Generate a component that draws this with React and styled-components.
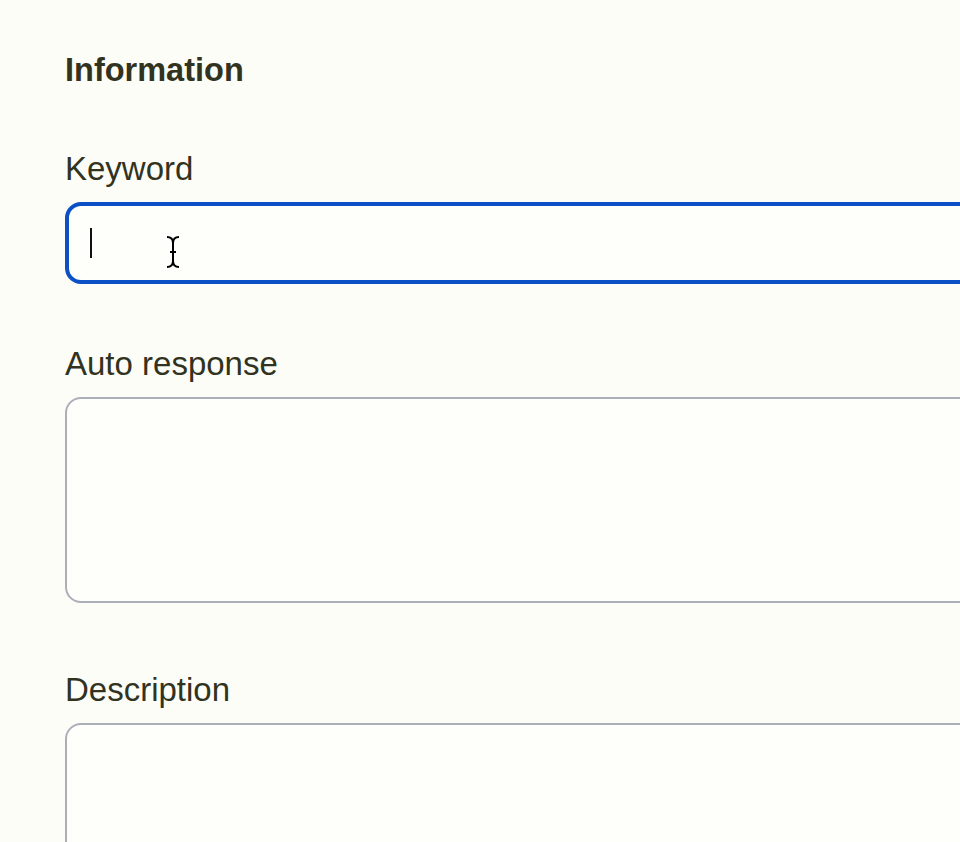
import React from "react";
import styled, { createGlobalStyle } from "styled-components";

const GlobalStyle = createGlobalStyle`
  html, body {
    margin: 0;
    padding: 0;
    overflow: hidden;
    background-color: #fdfdf8;
    font-family: "Liberation Sans", Arial, sans-serif;
  }
`;

const Page = styled.div`
  display: flex;
  flex-direction: column;
  padding: 51px 0 0 65px;
  height: 842px;
  box-sizing: border-box;
  overflow: hidden;
  color: #31331f;
`;

const Heading = styled.h3`
  margin: 0;
  font-size: 32.5px;
  line-height: 38px;
  font-weight: 700;
`;

const Field = styled.div`
  display: flex;
  flex-direction: column;
  gap: 14px;
  margin-top: ${(p) => p.top}px;
`;

const Label = styled.label`
  font-size: 33px;
  line-height: 38px;
  font-weight: 400;
`;

const Input = styled.div`
  position: relative;
  width: 1000px;
  height: 82px;
  box-sizing: border-box;
  border: 4px solid #0b50c4;
  border-radius: 16px;
  background: #fefefb;
`;

const Caret = styled.span`
  position: absolute;
  left: 21px;
  top: 22px;
  width: 2px;
  height: 30px;
  background: #111;
`;

const Pointer = styled.svg`
  position: absolute;
  left: 96px;
  top: 28px;
`;

const TextArea = styled.div`
  width: 1000px;
  height: ${(p) => p.h}px;
  box-sizing: border-box;
  border: 2px solid #acafb9;
  border-radius: 16px;
  background: #fefefb;
`;

const IBeam = () => (
  <Pointer width="16" height="36" viewBox="0 0 16 36">
    <path
      d="M2 3 C6 3 8 5 8 9 L8 27 C8 31 6 33 2 33 M14 3 C10 3 8 5 8 9 M8 27 C8 31 10 33 14 33 M5 18 L11 18"
      fill="none"
      stroke="#000"
      strokeWidth="2"
    />
  </Pointer>
);

export default function App() {
  return (
    <>
      <GlobalStyle />
      <Page>
        <Heading>Information</Heading>
        <Field top={61}>
          <Label>Keyword</Label>
          <Input>
            <Caret />
            <IBeam />
          </Input>
        </Field>
        <Field top={61}>
          <Label>Auto response</Label>
          <TextArea h={206} />
        </Field>
        <Field top={68}>
          <Label>Description</Label>
          <TextArea h={206} />
        </Field>
      </Page>
    </>
  );
}
